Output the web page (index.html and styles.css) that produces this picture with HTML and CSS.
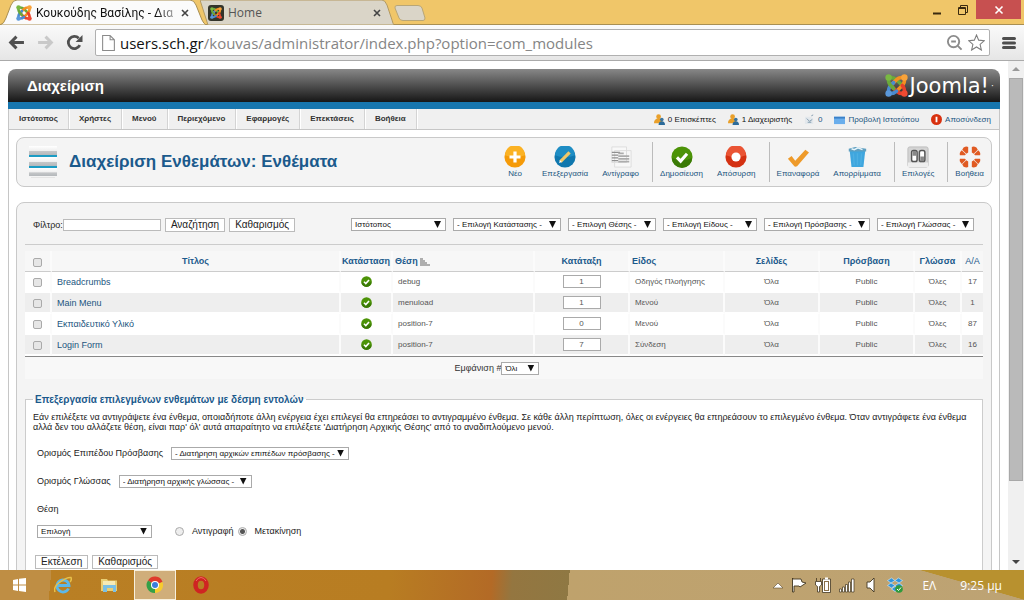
FILE: index.html
```html
<!DOCTYPE html>
<html lang="el">
<head>
<meta charset="utf-8">
<title>Διαχείριση Ενθεμάτων</title>
<link rel="stylesheet" href="styles.css">
</head>
<body>
<svg class="defs" aria-hidden="true">
  <symbol id="joomla" viewBox="0 0 32 32">
    <g fill="none" stroke-width="5" stroke-linecap="round" stroke-linejoin="round">
      <path stroke="#6aa83a" d="M5 5Q12 4 16 8L22 14"/>
      <path stroke="#f39021" d="M27 5Q28 12 24 16L18 22M27 5Q19 4 16 8L9 15"/>
      <path stroke="#e8402b" d="M27 27Q20 28 16 24L10 18M27 27Q28 20 24 16"/>
      <path stroke="#4b8bcf" d="M5 27Q4 20 8 16L12 12M5 27Q12 28 16 24"/>
      <path stroke="#6aa83a" d="M5 5Q4 12 8 16L12 20"/>
    </g>
    <circle cx="5" cy="5" r="4.500" fill="#79b842"/><circle cx="27" cy="5" r="4.500" fill="#f9a33a"/>
    <circle cx="27" cy="27" r="4.500" fill="#ee4a32"/><circle cx="5" cy="27" r="4.500" fill="#5a98da"/>
  </symbol>
  <symbol id="tick" viewBox="0 0 24 24">
    <circle cx="12" cy="12" r="11.500" fill="#4c9307"/><path d="M1 13a11 11 0 0 0 22 0q-11 5-22 0z" fill="#3a7a05"/>
    <path d="M6.500 12.500l4 4 7-8" fill="none" stroke="#fff" stroke-width="3.400"/>
  </symbol>
  <symbol id="people" viewBox="0 0 12 12">
    <circle cx="5" cy="3" r="2.600" fill="#e9a02b"/><path d="M0 10q0-5 5-5t4 5z" fill="#e9a02b"/>
    <circle cx="8.500" cy="6" r="2" fill="#39749f"/><path d="M5 12q0-4 3.500-4t3.500 4z" fill="#2d6c9b"/>
  </symbol>
</svg>

<header class="tabstrip">
  <div class="tab tab-active">
    <svg class="tab-shape" viewBox="0 0 206 25" preserveAspectRatio="none"><path d="M0 25Q4 24 6 18L11 5Q13 0 17 0H190Q194 0 196 5L202 20Q204 24 206 25z" fill="#fbfbfb" stroke="#a98f52"/></svg>
    <svg class="favicon"><use href="#joomla"/></svg>
    <span class="tab-title">Κουκούδης Βασίλης - Δια</span>
    <button class="tab-close" aria-label="Κλείσιμο"><svg viewBox="0 0 8 8"><path d="M1 1l6 6M7 1l-6 6"/></svg></button>
  </div>
  <div class="tab tab-idle">
    <svg class="tab-shape" viewBox="0 0 194 25" preserveAspectRatio="none"><path d="M0 0H182Q185 0 187 5L192 20Q193 24 194 25H8z" fill="#dad5c8" stroke="#b39a62"/></svg>
    <svg class="favicon" viewBox="0 0 16 16"><rect width="16" height="16" rx="3" fill="#33342a"/><use href="#joomla" x="2" y="2" width="12" height="12"/></svg>
    <span class="tab-title">Home</span>
    <button class="tab-close" aria-label="Κλείσιμο"><svg viewBox="0 0 8 8"><path d="M1 1l6 6M7 1l-6 6"/></svg></button>
  </div>
  <button class="newtab" aria-label="Νέα καρτέλα"><svg viewBox="0 0 32 16"><path d="M3 .5H24Q27 .5 28 3L31 13Q31 15.500 29 15.500H9Q6 15.500 5 13L1 3Q.5.5 3 .5z" fill="#dad5c8" stroke="#b8a677"/></svg></button>
  <div class="winbtns">
    <button class="winbtn" aria-label="Ελαχιστοποίηση"><svg viewBox="0 0 10 10"><path d="M1 8.500h8" stroke="#3a2a10" stroke-width="2"/></svg></button>
    <button class="winbtn" aria-label="Επαναφορά"><svg viewBox="0 0 10 10"><path d="M.5 2.500h7v7h-7zM.5 3.500h7M2.500 2V.5h7v7H8" fill="none" stroke="#3a2a10"/></svg></button>
    <button class="winbtn winclose" aria-label="Κλείσιμο"><svg viewBox="0 0 10 10"><path d="M1.500 1.500l7 7M8.500 1.500l-7 7" stroke="#fff" stroke-width="1.600"/></svg></button>
  </div>
</header>

<nav class="addressbar">
  <button class="nav" aria-label="Πίσω"><svg viewBox="0 0 16 16"><path d="M15 8H3M8 2.500L2.500 8 8 13.500" fill="none" stroke="#505050" stroke-width="2.800"/></svg></button>
  <button class="nav" aria-label="Εμπρός"><svg viewBox="0 0 16 16"><path d="M1 8h12M8 2.500L13.500 8 8 13.500" fill="none" stroke="#c9c9c9" stroke-width="2.800"/></svg></button>
  <button class="nav" aria-label="Ανανέωση"><svg viewBox="0 0 16 16"><path d="M13 10.500A5.700 5.700 0 1 1 12 4" fill="none" stroke="#505050" stroke-width="2.600"/><path d="M15.500 1v6.500H9z" fill="#505050"/></svg></button>
  <div class="omnibox">
    <svg class="pageicon" viewBox="0 0 12 15"><path d="M.5.5h7l4 4v10H.5zM7.500.5v4h4" fill="#fff" stroke="#8a8a8a"/></svg>
    <span class="url"><b>users.sch.gr</b>/kouvas/administrator/index.php?option=com_modules</span>
    <svg class="omni-icon" viewBox="0 0 18 18"><circle cx="8" cy="8" r="6" fill="none" stroke="#8c8c8c" stroke-width="2"/><path d="M5.500 8h5M12.500 12.500l4 4" stroke="#8c8c8c" stroke-width="2"/></svg>
    <svg class="omni-icon" viewBox="0 0 18 18"><path d="M9 1l2.300 5.500 6 .5-4.500 4 1.400 6L9 13.700 3.800 17l1.400-6L.7 7l6-.5z" fill="#fff" stroke="#7d7d7d" stroke-width="1.100"/></svg>
  </div>
  <button class="nav" aria-label="Μενού"><svg viewBox="0 0 14 14"><path d="M1.500 2.500h11M1.500 7h11M1.500 11.500h11" stroke="#4d4d4d" stroke-width="3" stroke-linecap="round"/></svg></button>
</nav>

<div class="viewport">
<main class="page">
  <div class="masthead">
    <h1>Διαχείριση</h1>
    <div class="brand"><svg class="brandmark"><use href="#joomla"/></svg><span>Joomla!</span><sup>·</sup></div>
  </div>
  <div class="menubar">
    <nav class="menu">
      <a href="#">Ιστότοπος</a><a href="#">Χρήστες</a><a href="#">Μενού</a><a href="#">Περιεχόμενο</a><a href="#">Εφαρμογές</a><a href="#">Επεκτάσεις</a><a href="#">Βοήθεια</a>
    </nav>
    <div class="status">
      <span><svg><use href="#people"/></svg>0 Επισκέπτες</span>
      <span><svg><use href="#people"/></svg>1 Διαχειριστής</span>
      <a href="#"><svg viewBox="0 0 12 12"><path d="M1 3h6l3 2v6H1z" fill="#e3e8ec"/><path d="M3 5l3 3 3-2M4 9h4M8 2l2-1" fill="none" stroke="#7d97ab"/></svg>0</a>
      <a href="#"><svg viewBox="0 0 12 12"><path d="M0 3h12v8H0z" fill="#6aaeec"/><path d="M0 3h12v2H0z" fill="#3a80c8"/></svg>Προβολή Ιστοτόπου</a>
      <a href="#"><svg viewBox="0 0 12 12"><circle cx="6" cy="6" r="6" fill="#d8310f"/><path d="M6 3v6" stroke="#fff" stroke-width="2"/></svg>Αποσύνδεση</a>
    </div>
  </div>

  <div class="body">
    <section class="panel titlebar">
      <svg class="titleicon" viewBox="0 0 30 34">
        <defs><linearGradient id="bar" x2="0" y2="1"><stop offset="0" stop-color="#fff"/><stop offset=".5" stop-color="#f0f0f0"/><stop offset=".6" stop-color="#c4c6c8"/><stop offset="1" stop-color="#b4b8bb"/></linearGradient></defs>
        <path d="M1 9h28v3H1zM1 20h28v3H1z" fill="#1c9cc4"/>
        <rect x="1" y="1" width="28" height="9" fill="url(#bar)"/><rect x="1" y="12" width="28" height="9" fill="url(#bar)"/><rect x="1" y="23" width="28" height="8" fill="url(#bar)"/>
        <path d="M3 32h24v1H3z" fill="#e4e4e4"/>
      </svg>
      <h2>Διαχείριση Ενθεμάτων: Ενθέματα</h2>
      <div class="tools">
        <a href="#"><svg viewBox="0 0 24 24"><circle cx="12" cy="12" r="11.500" fill="#f59a08"/><path d="M1 10a11 11 0 0 1 22 0q-11 4-22 0z" fill="#fbb224"/><path d="M12 6v12M6 12h12" stroke="#fff" stroke-width="3.500"/></svg>Νέο</a>
        <a href="#"><svg viewBox="0 0 24 24"><circle cx="12" cy="12" r="11.500" fill="#0f77ae"/><path d="M1 10a11 11 0 0 1 22 0q-11 4-22 0z" fill="#1e8dc4"/><path d="M7 17L17 7" stroke="#f1c869" stroke-width="3.500"/><path d="M5.500 18.500l1-3 2 2z" fill="#fff"/></svg>Επεξεργασία</a>
        <a href="#"><svg viewBox="0 0 24 24"><path d="M2 1h16v17H2zM5 5h18v18H5z" fill="#f8f8f8" stroke="#dcdcdc"/><path d="M2 7h9M2 10h7M2 13h7M2 16h7" stroke="#8f8f8f" stroke-width="1.500"/><path d="M9 8h6M9 11h12M9 14h12M9 17h12" stroke="#adadad" stroke-width="2"/></svg>Αντίγραφο</a>
        <i class="sep"></i>
        <a href="#"><svg><use href="#tick"/></svg>Δημοσίευση</a>
        <a href="#"><svg viewBox="0 0 24 24"><circle cx="12" cy="12" r="11.500" fill="#d43112"/><path d="M1 10a11 11 0 0 1 22 0q-11 4-22 0z" fill="#ea5434"/><circle cx="12" cy="12" r="5" fill="#fff"/></svg>Απόσυρση</a>
        <i class="sep"></i>
        <a href="#"><svg viewBox="0 0 24 24"><path d="M1 14l4-3 4 5L20 4l4 3-13 15q-2 1-3 0z" fill="#ee9a2a"/></svg>Επαναφορά</a>
        <a href="#"><svg viewBox="0 0 24 24"><path d="M4 5h17l-2 18H6z" fill="#3fa6de"/><path d="M8 8l1 13M12.500 8v13M17 8l-1 13" stroke="#4dafe2" stroke-width="1.500"/><path d="M3 3l7-2 5 1 7 1v3H3z" fill="#5f9fc0"/><path d="M6 3l3 1 4-2 5 2" fill="none" stroke="#e8f5fb" stroke-width="1.500"/></svg>Απορρίμματα</a>
        <i class="sep"></i>
        <a href="#"><svg viewBox="0 0 24 24"><rect x="1" y="1" width="22" height="22" rx="2" fill="#d4d4d4" stroke="#bbb"/><path d="M1 18h22v5H1z" fill="#eee"/><rect x="5" y="5" width="6" height="12" rx="2" fill="#fff" stroke="#555" stroke-width="1.600"/><rect x="13.500" y="5" width="6" height="12" rx="2" fill="#fff" stroke="#555" stroke-width="1.600"/><path d="M6 5.500h4v5H6zM14.500 11.500h4v5h-4z" fill="#888"/></svg>Επιλογές</a>
        <i class="sep"></i>
        <a href="#"><svg viewBox="0 0 24 24"><g fill="#e05a22"><path d="M5 1.500Q8 0 10 1v6L8 8.500 3.500 4z"/><path d="M1 10Q0 7 3 4.500L7.500 9l-1 1z"/><path d="M19 1.500Q16 0 14 1v6l2 1.500L20.500 4z"/><path d="M23 10q1-3-2-5.500L16.500 9l1 1z"/><path d="M5 22.500Q8 24 10 23v-6l-2-1.500L3.500 20z"/><path d="M1 14q-1 3 2 5.500L7.500 15l-1-1z"/><path d="M19 22.500Q16 24 14 23v-6l2-1.500 4.500 4.500z"/><path d="M23 14q1 3-2 5.500L16.500 15l1-1z"/></g></svg>Βοήθεια</a>
      </div>
    </section>

    <section class="panel content">
      <form class="filters">
        <label for="q">Φίλτρο:</label><input id="q" class="search" type="text">
        <button type="button" class="btn">Αναζήτηση</button>
        <button type="button" class="btn">Καθαρισμός</button>
        <div class="selects">
          <span class="sel w-site"><select aria-label="Ιστότοπος"><option>Ιστότοπος</option></select></span>
          <span class="sel w-state"><select aria-label="Κατάσταση"><option>- Επιλογή Κατάστασης -</option></select></span>
          <span class="sel w-pos"><select aria-label="Θέση"><option>- Επιλογή Θέσης -</option></select></span>
          <span class="sel w-type"><select aria-label="Είδος"><option>- Επιλογή Είδους -</option></select></span>
          <span class="sel w-access"><select aria-label="Πρόσβαση"><option>- Επιλογή Πρόσβασης -</option></select></span>
          <span class="sel w-lang"><select aria-label="Γλώσσα"><option>- Επιλογή Γλώσσας -</option></select></span>
        </div>
      </form>

      <table class="list">
        <colgroup><col class="c-check"><col><col class="c-state"><col class="c-pos"><col class="c-mid"><col class="c-mid"><col class="c-mid"><col class="c-mid"><col class="c-lang"><col class="c-id"></colgroup>
        <thead><tr>
          <th><input type="checkbox" aria-label="Επιλογή όλων"></th><th>Τίτλος</th><th>Κατάσταση</th>
          <th class="left">Θέση <svg class="sort" viewBox="0 0 10 8"><path d="M0 1h3M0 3h5M0 5h7M0 7h10" stroke="#666" stroke-width="1.200"/></svg></th>
          <th>Κατάταξη</th><th class="left">Είδος</th><th>Σελίδες</th><th>Πρόσβαση</th><th>Γλώσσα</th><th>Α/Α</th>
        </tr></thead>
        <tbody>
          <tr><td><input type="checkbox" aria-label="Breadcrumbs"></td><td class="name"><a href="#">Breadcrumbs</a></td><td><svg class="ok"><use href="#tick"/></svg></td><td class="left">debug</td><td><input class="order" type="text" value="1" aria-label="Κατάταξη"></td><td class="left">Οδηγός Πλοήγησης</td><td>Όλα</td><td>Public</td><td>Όλες</td><td>17</td></tr>
          <tr><td><input type="checkbox" aria-label="Main Menu"></td><td class="name"><a href="#">Main Menu</a></td><td><svg class="ok"><use href="#tick"/></svg></td><td class="left">menuload</td><td><input class="order" type="text" value="1" aria-label="Κατάταξη"></td><td class="left">Μενού</td><td>Όλα</td><td>Public</td><td>Όλες</td><td>1</td></tr>
          <tr><td><input type="checkbox" aria-label="Εκπαιδευτικό Υλικό"></td><td class="name"><a href="#">Εκπαιδευτικό Υλικό</a></td><td><svg class="ok"><use href="#tick"/></svg></td><td class="left">position-7</td><td><input class="order" type="text" value="0" aria-label="Κατάταξη"></td><td class="left">Μενού</td><td>Όλα</td><td>Public</td><td>Όλες</td><td>87</td></tr>
          <tr><td><input type="checkbox" aria-label="Login Form"></td><td class="name"><a href="#">Login Form</a></td><td><svg class="ok"><use href="#tick"/></svg></td><td class="left">position-7</td><td><input class="order" type="text" value="7" aria-label="Κατάταξη"></td><td class="left">Σύνδεση</td><td>Όλα</td><td>Public</td><td>Όλες</td><td>16</td></tr>
        </tbody>
      </table>
      <div class="pager"><label for="limit">Εμφάνιση #</label><span class="sel w-limit"><select id="limit"><option>Όλι</option></select></span></div>

      <fieldset class="batch">
        <legend>Επεξεργασία επιλεγμένων ενθεμάτων με δέσμη εντολών</legend>
        <p>Εάν επιλέξετε να αντιγράψετε ένα ένθεμα, οποιαδήποτε άλλη ενέργεια έχει επιλεγεί θα επηρεάσει το αντιγραμμένο ένθεμα. Σε κάθε άλλη περίπτωση, όλες οι ενέργειες θα επηρεάσουν το επιλεγμένο ένθεμα. Όταν αντιγράφετε ένα ένθεμα αλλά δεν του αλλάζετε θέση, είναι παρ' όλ' αυτά απαραίτητο να επιλέξετε 'Διατήρηση Αρχικής Θέσης' από το αναδιπλούμενο μενού.</p>
        <div class="field"><label for="acc">Ορισμός Επιπέδου Πρόσβασης</label><span class="sel w-bacc"><select id="acc"><option>- Διατήρηση αρχικών επιπέδων πρόσβασης -</option></select></span></div>
        <div class="field"><label for="lng">Ορισμός Γλώσσας</label><span class="sel w-blang"><select id="lng"><option>- Διατήρηση αρχικής γλώσσας -</option></select></span></div>
        <div class="field"><label for="pos">Θέση</label></div>
        <div class="field choice"><span class="sel w-bpos"><select id="pos"><option>Επιλογή</option></select></span>
          <div class="radios"><span><input type="radio" name="m" id="m1"><label for="m1">Αντιγραφή</label></span><span><input type="radio" name="m" id="m2" checked><label for="m2">Μετακίνηση</label></span></div></div>
        <div class="actions"><button type="button" class="btn">Εκτέλεση</button><button type="button" class="btn">Καθαρισμός</button></div>
      </fieldset>
    </section>
  </div>
</main>
<div class="scrollbar"><i class="up"></i><i class="thumb"></i><i class="down"></i></div>
</div>

<footer class="taskbar">
  <button class="task" aria-label="Έναρξη"><svg viewBox="0 0 18 18"><path d="M3 4l5-1v5.500H3zM9 2.800L16 2v6.500H9zM3 9.500h5V15l-5-1zM9 9.500h7V16l-7-.9z" fill="#fff"/></svg></button>
  <button class="task" aria-label="Internet Explorer"><svg viewBox="0 0 18 18"><path d="M14.500 12.500A6 6 0 1 1 15 9.500H4" fill="none" stroke="#5cb8ea" stroke-width="2.800"/><path d="M1 16Q-1 11 6 6T17 1.500Q18 4 16 6" fill="none" stroke="#e8c04a" stroke-width="1.500"/></svg></button>
  <button class="task" aria-label="Αρχεία"><svg viewBox="0 0 18 18"><path d="M1 3h6l1 1.500h9V15H1z" fill="#e9cf74"/><path d="M3 5h12v4H3z" fill="#f7ebb5"/><path d="M3 9h13v7h-3v-4H7v4H3z" fill="#7bc0e4"/></svg></button>
  <button class="task task-on" aria-label="Chrome"><svg viewBox="0 0 18 18"><path d="M9 9L2 4.500A8 8 0 0 1 16.500 6z" fill="#df3a2c"/><path d="M9 9l7.500-3A8 8 0 0 1 9 17z" fill="#f7cc2f"/><path d="M9 9v8A8 8 0 0 1 2 4.500z" fill="#35a047"/><circle cx="9" cy="9" r="4" fill="#fff"/><circle cx="9" cy="9" r="3" fill="#3b7ddb"/></svg></button>
  <button class="task" aria-label="Opera"><svg viewBox="0 0 18 18"><ellipse cx="9" cy="9" rx="5.500" ry="6.500" fill="none" stroke="#cf2422" stroke-width="4.500"/><path d="M4 5Q6 1.500 9 1.500T14 5" fill="none" stroke="#ee6a64" stroke-width="1"/></svg></button>
  <div class="tray">
    <svg class="t-small" viewBox="0 0 10 8"><path d="M0 7l5-5 5 5z" fill="#fff" stroke="#5d4a2c" stroke-width=".6"/></svg>
    <svg viewBox="0 0 16 16"><path d="M1.500 1v14h1.500V9h5l1 1 6-4-4-1-1-3H2z" fill="#fff" stroke="#41351f" stroke-width=".9"/></svg>
    <svg viewBox="0 0 16 16"><path d="M7.500 2h8v13.500h-8z" fill="#fff" stroke="#41351f" stroke-width=".8"/><path d="M9 4h5v10H9z" fill="#8a7048"/><path d="M10 5h3v8h-3zM10 .5h3v2h-3z" fill="#fff"/><path d="M.5 4.500h6V8L4.500 9.500V15h-2V9.500L.5 8zM1.500 1v3M5.500 1v3" fill="#fff" stroke="#41351f" stroke-width=".8"/></svg>
    <svg viewBox="0 0 16 16"><path d="M.5 12h2v3h-2zM3.500 10h2v5h-2zM6.500 7.500h2V15h-2zM9.500 5h2v10h-2zM12.500 2h2.500v13h-2.500z" fill="#fff" stroke="#41351f" stroke-width=".7"/></svg>
    <svg viewBox="0 0 16 16"><path d="M4 5h3l4-4v14l-4-4H4z" fill="#fff" stroke="#41351f" stroke-width=".9"/></svg>
    <svg viewBox="0 0 16 16"><path d="M4.500 1L8 3.500 4 6 .5 3.500zM11.500 1L8 3.500 12 6l3.500-2.500zM4 6l4 2.500L4.500 11 .5 8.500zM12 6L8 8.500l3.500 2.500 4-2.500zM8 9.500l3.500 2.500L8 14.500 4.500 12z" fill="#2f94dc" stroke="#d8eefb" stroke-width=".6"/><circle cx="12" cy="12" r="3.800" fill="#2e9a3c"/><path d="M10 12l1.500 1.500L14 10.500" fill="none" stroke="#fff"/></svg>
    <span class="lang">ΕΛ</span><span class="clock">9:25 μμ</span>
  </div>
</footer>
</body>
</html>
```

FILE: styles.css
```css
* { box-sizing: border-box; }
body { margin: 0; height: 100vh; display: flex; flex-direction: column; overflow: hidden; background: #fff; font-family: "Liberation Sans", Arial, sans-serif; font-size: 9px; color: #333; }
button, input, select { font-family: inherit; margin: 0; }
a { color: #1b5580; text-decoration: none; }
h1, h2, p { margin: 0; }
.defs { position: absolute; width: 0; height: 0; }

/* browser chrome */
.tabstrip { flex: none; height: 25px; display: flex; background: #f0c669; border-bottom: 1px solid #a98f52; font-family: "Open Sans", sans-serif; font-size: 12px; }
.tab { position: relative; display: flex; align-items: center; gap: 4px; height: 25px; }
.tab-shape { position: absolute; inset: 0; width: 100%; height: 100%; }
.tab > :not(.tab-shape) { position: relative; }
.tab-active { width: 206px; padding: 0 14px 0 16px; color: #111; z-index: 1; font-family: Roboto, sans-serif; }
.tab-idle { width: 194px; margin-left: -6px; padding: 0 9px 0 8px; color: #555; }
.tab-title { flex: 1; white-space: nowrap; }
.tab-active .tab-title { -webkit-mask-image: linear-gradient(90deg, #000 88%, #0006); mask-image: linear-gradient(90deg, #000 88%, #0006); }
.favicon { width: 16px; height: 16px; flex: none; }
.tab-close, .newtab, .winbtn, .nav, .task { border: 0; background: none; padding: 0; display: flex; align-items: center; justify-content: center; }
.tab-close { width: 16px; height: 16px; }
.tab-close svg { width: 8px; height: 8px; stroke: #444; stroke-width: 1.6; }
.newtab { padding-top: 5px; height: 21px; }
.newtab svg { width: 32px; height: 16px; }
.winbtns { margin-left: auto; display: flex; height: 19px; padding-right: 3px; }
.winbtn { width: 26px; }
.winbtn svg { width: 10px; height: 10px; }
.winbtn.winclose { width: 45px; background: #c75050; }

.addressbar { flex: none; height: 36px; display: flex; align-items: center; padding: 0 8px; gap: 12px; background: linear-gradient(#fafafa, #e6e6e6); border-bottom: 1px solid #aaa; }
.nav svg { width: 17px; height: 17px; }
.addressbar .nav:last-child svg { width: 14px; height: 14px; }
.omnibox { flex: 1; height: 27px; display: flex; align-items: center; gap: 5px; padding: 0 4px 0 6px; background: #fff; border: 1px solid #b0b0b0; border-radius: 2px; }
.pageicon { width: 13px; height: 16px; }
.url { flex: 1; font: 15px "Open Sans", sans-serif; color: #858585; white-space: nowrap; overflow: hidden; }
.url b { font-weight: 400; color: #111; }
.omni-icon { width: 17px; height: 17px; }

.viewport { flex: 1; min-height: 0; display: flex; overflow: hidden; }
.page { flex: 1; min-width: 0; padding: 8px; }
.scrollbar { width: 16px; background: #f0f0f0; display: flex; flex-direction: column; align-items: center; padding: 6px 0; }
.up, .down { border: 4px solid transparent; }
.up { border-top: 0; border-bottom-color: #999; }
.down { border-bottom: 0; border-top-color: #444; margin-top: auto; }
.thumb { width: 14px; height: 81%; margin-top: 7px; background: #bababa; border: 1px solid #a8a8a8; }

/* Joomla header */
.masthead { height: 40px; display: flex; align-items: center; justify-content: space-between; padding: 0 8px 0 19px; background: linear-gradient(#888, #161616); border-bottom: 7px solid #1776ae; border-radius: 8px 8px 0 0; color: #fff; }
.masthead h1 { font-size: 15px; }
.brand { display: flex; align-items: center; gap: 2px; font: 21px "DejaVu Sans", sans-serif; }
.brand sup { font-size: 9px; width: 1px; }
.brandmark { width: 23px; height: 23px; }
.menubar { height: 21px; display: flex; justify-content: space-between; background: #f0f0f0; border: 1px solid #c6c6c6; border-top: 0; white-space: nowrap; font-size: 8px; }
.menu { display: flex; }
.menu a { padding: 0 10px; line-height: 20px; font-weight: 700; color: #333; border-right: 1px solid #d4d4d4; box-shadow: 1px 0 #fff; }
.status { display: flex; align-items: center; gap: 12px; padding-right: 8px; color: #111; }
.status > * { display: flex; align-items: center; gap: 3px; }
.status svg { width: 11px; height: 11px; }

.body { border: 1px solid #c6c6c6; border-width: 0 1px; padding: 7px 7px 0; background: #fff; }
.panel { border: 1px solid #c9c9c9; border-radius: 8px; background: #f4f4f4; }
.titlebar { height: 50px; display: flex; align-items: center; padding-left: 10px; margin-bottom: 15px; }
.titleicon { width: 32px; height: 34px; }
h2 { margin-left: 10px; font-size: 17px; color: #1b5a8c; white-space: nowrap; }
.tools { margin-left: auto; display: flex; align-items: center; height: 40px; font-size: 8px; line-height: 10px; }
.tools a { min-width: 40px; padding: 0 7px; display: flex; flex-direction: column; align-items: center; gap: 1px; }
.tools svg { width: 22px; height: 22px; }
.sep { width: 1px; height: 40px; background: #bbb; margin: 0 0 0 6px; }

.content { padding: 14px 8px 40px; }
.filters { display: flex; align-items: center; box-sizing: content-box; height: 15px; padding: 0 9px 12px 8px; border-bottom: 1px solid #ccc; color: #222; }
.search { width: 98px; height: 12px; border: 1px solid #bbb; padding: 0 2px; margin-right: 4px; }
.btn { height: 14px; padding: 0 5px; margin-right: 4px; border: 1px solid #bbb; background: #fff; font-size: 10px; line-height: 12px; color: #222; white-space: nowrap; }
.selects { margin-left: auto; display: flex; gap: 7px; }
.sel { position: relative; display: inline-flex; height: 13px; }
.sel::after { content: ""; position: absolute; right: 5px; top: 3px; width: 7px; height: 7px; background: #111; clip-path: polygon(0 0, 100% 0, 50% 100%); pointer-events: none; }
.sel select { appearance: none; width: 100%; height: 13px; padding: 0 3px; border: 1px solid #aaa; border-radius: 0; background: #fff; font-size: 8px; color: #111; }
.w-site { width: 95px; } .w-state { width: 108px; } .w-pos { width: 88px; } .w-type { width: 94px; } .w-access { width: 106px; } .w-lang { width: 97px; }
.w-limit { width: 38px; } .w-bacc { width: 178px; } .w-blang { width: 133px; } .w-bpos { width: 115px; }

.list { width: 100%; table-layout: fixed; margin-top: 6px; border-spacing: 0; border-collapse: separate; border-bottom: 1px solid #888; }
.c-check { width: 27px; } .c-state { width: 52px; } .c-pos { width: 142px; } .c-mid { width: 95px; } .c-lang { width: 47px; } .c-id { width: 21px; }
.list th, .list td { padding: 0; text-align: center; white-space: nowrap; vertical-align: middle; border-right: 2px solid #fbfbfb; }
.list tr > :last-child { border-right: 0; }
.list th { height: 21px; background: #f7f7f7; border-bottom: 1px solid #ccc; color: #1b5a8c; }
.list th:last-child { font-weight: 400; }
.list td { height: 21px; background: #fff; border-bottom: 2px solid #fff; color: #555; font-size: 8px; }
.list tr:nth-child(even) td { background: #eee; }
.list th.left { text-align: left; padding-left: 2px; }
.list td.left { text-align: left; padding-left: 5px; }
.list td.name { text-align: left; padding-left: 5px; font-size: 9px; }
.list input[type=checkbox] { appearance: none; display: block; width: 9px; height: 9px; margin: 2px auto 0; border: 1px solid #aaa; border-radius: 2px; background: #e6e6e6; }
.sort { width: 10px; height: 8px; vertical-align: bottom; }
.ok { width: 11px; height: 11px; display: block; margin: 0 auto; }
.order { display: block; width: 38px; height: 13px; margin: 0 auto; border: 1px solid #aaa; padding: 0; text-align: center; font-size: 8px; color: #555; }
.pager { height: 22px; display: flex; align-items: center; justify-content: center; padding-right: 14px; background: #f8f8f8; }
.pager label { color: #333; }

.batch { margin: 15px 0 0; padding: 7px 7px 20px; border: 1px solid #ccc; background: #fff; color: #222; min-width: 0; }
.batch legend { padding: 0 2px; font-size: 10px; font-weight: 700; color: #1b5a8c; }
.batch p { line-height: 10px; margin-bottom: 14px; }
.field { height: 14px; display: flex; align-items: center; gap: 8px; margin: 0 4px 14px; }
.choice { margin-top: -6px; margin-bottom: 17px; }
.radios { display: flex; align-items: center; gap: 4px; margin-left: 15px; }
.radios span { display: flex; align-items: center; gap: 8px; }
.radios input { appearance: none; width: 9px; height: 9px; border: 1px solid #aaa; border-radius: 50%; background: #eee; }
.radios input:checked { background: radial-gradient(#555 0 2px, #eee 3px); }
.actions { display: flex; padding-left: 2px; }

/* taskbar */
.taskbar { flex: none; height: 30px; display: flex; align-items: stretch; background: linear-gradient(to top right, transparent 50%, #b8912f 51%) right / 105px 100% no-repeat, linear-gradient(95deg, #bf8e44 0 5%, #b97f24 5%, #b87d22 38%, #b36a26 48%, #947640 50%, #8f7843 55.5%, #bfa26c 55.5%, #bda374); color: #fff; font-family: "Open Sans", sans-serif; font-size: 12px; }
.task { width: 42px; margin-right: 4px; }
.task:first-child { width: 38px; }
.task svg { width: 18px; height: 18px; }
.task-on { background: #d0ae7a; border: 1px solid #f8f0dc; }
.tray { margin-left: auto; display: flex; align-items: center; gap: 8px; padding-right: 22px; }
.tray svg { width: 16px; height: 16px; }
.tray .t-small { width: 10px; height: 8px; }
.lang { margin-left: 11px; }
.clock { margin-left: 16px; }
```
